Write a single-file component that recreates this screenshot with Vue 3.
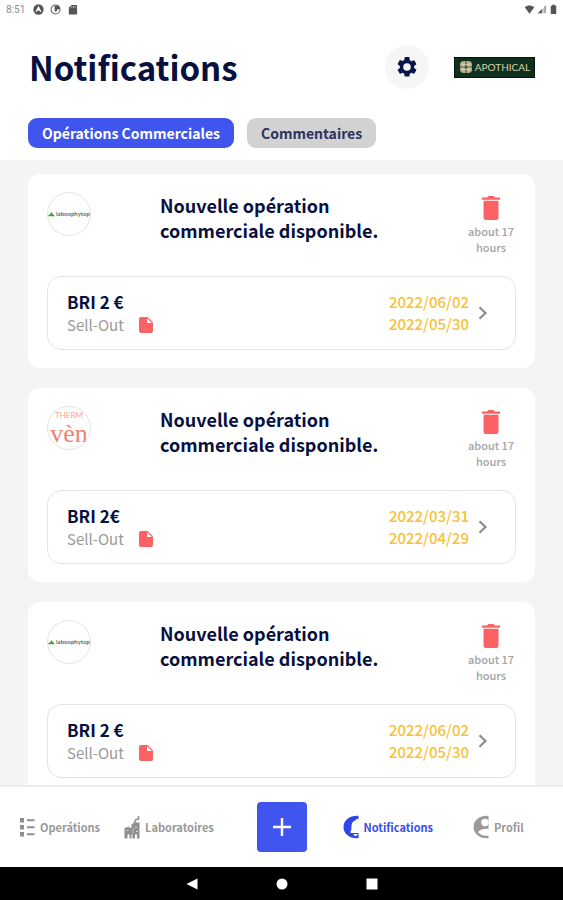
<template>
  <div class="app-screen">
    <div class="status-bar">
      <div class="status-group">
        <span class="status-time">8:51</span>
        <svg class="status-icon" viewBox="0 0 12 12">
          <circle cx="6" cy="6" r="5.6" fill="#555" />
          <path d="M3.4 8.4 6 3.4l2.6 5M4.6 7 6 6l1.4 1" fill="none" stroke="#fff" stroke-width="1.3" />
        </svg>
        <svg class="status-icon" viewBox="0 0 12 12">
          <circle cx="6" cy="6" r="4.9" fill="#fff" stroke="#666" stroke-width="1.2" />
          <path d="M5 2h5l1 3.500-3 .5-1.500 3L5 7z" fill="#555" />
        </svg>
        <svg class="status-icon" viewBox="0 0 12 12">
          <path d="M5 1h5a1 1 0 0 1 1 1v8.500a1 1 0 0 1-1 1H3a1 1 0 0 1-1-1V4z" fill="#555" />
          <path d="M5.200 2.400v1.800M7 2.400v1.800M8.800 2.400v1.800" stroke="#ddd" stroke-width=".8" />
        </svg>
      </div>
      <div class="status-group status-right">
        <svg class="status-icon" viewBox="0 0 12 12">
          <path d="M.8 3.600C4 1 8 1 11.200 3.600L6 10.500z" fill="#555" />
        </svg>
        <svg class="status-icon" viewBox="0 0 12 12">
          <path d="M10.500 1.500v8.500H2z" fill="#ccc" />
          <path d="M6.500 5.500V10H2z" fill="#555" />
          <path d="M10 2v8" stroke="#777" />
        </svg>
        <svg class="status-icon" viewBox="0 0 12 12">
          <path d="M4.500.8h3v1.200H9v9H3V2h1.500z" fill="#555" />
        </svg>
      </div>
    </div>

    <header class="page-header">
      <div class="title-row">
        <h1>Notifications</h1>
        <button class="settings-btn" type="button" aria-label="Paramètres">
          <svg viewBox="0 0 24 24">
            <path fill="#07154a" d="M19.140 12.940c.04-.3.060-.61.060-.94s-.02-.64-.07-.94l2.030-1.580a.49.49 0 0 0 .12-.61l-1.920-3.320a.49.49 0 0 0-.59-.22l-2.390.96a7 7 0 0 0-1.620-.94l-.36-2.540A.48.48 0 0 0 13.920 2h-3.840a.48.48 0 0 0-.47.410l-.36 2.540a7.300 7.300 0 0 0-1.620.94l-2.390-.96a.49.49 0 0 0-.59.220L2.740 8.870a.48.48 0 0 0 .12.610l2.030 1.580a6 6 0 0 0 0 1.880l-2.030 1.580a.49.49 0 0 0-.12.610l1.920 3.320c.12.220.37.290.59.220l2.390-.96c.5.380 1.030.7 1.620.94l.36 2.540c.05.240.24.410.48.410h3.840c.24 0 .44-.17.470-.41l.36-2.540a7.300 7.300 0 0 0 1.620-.94l2.390.96c.22.080.47 0 .59-.22l1.920-3.320a.48.48 0 0 0-.12-.61zM12 15.800a3.800 3.800 0 1 1 0-7.600 3.800 3.800 0 0 1 0 7.600" />
          </svg>
        </button>
        <div class="brand">
          <svg viewBox="0 0 14 14">
            <rect x="1" y="1" width="12" height="12" rx="4" fill="#b9b18d" />
            <path d="M7 0v14M0 7h14" stroke="#14301f" stroke-width=".8" />
            <path d="M4 3v8M10 3v8M3 4.500h8M3 9.500h8" stroke="#e4dcb8" stroke-width=".6" />
          </svg>
          <span>APOTHICAL</span>
        </div>
      </div>
      <div class="tabs">
        <button
          v-for="(tab, idx) in tabs"
          :key="tab"
          type="button"
          class="tab"
          :class="{ active: activeTab === idx }"
          @click="activeTab = idx"
        >{{ tab }}</button>
      </div>
    </header>

    <main class="list">
      <article v-for="item in notifications" :key="item.id" class="card">
        <div class="card-top">
          <div class="avatar">
            <div v-if="item.lab === 'thermale'" class="logo-ven">
              <span class="logo-ven-small">THERM</span>
              <span class="logo-ven-big">vèn</span>
            </div>
            <div v-else class="logo-naco">
              <svg viewBox="0 0 8 6">
                <path d="M0 5.500C1 3 2 3.500 2.500 4 3 1 4.500 0 5 2.500c.5 1 2 2 3 3z" fill="#36a12c" />
              </svg>
              <span>laboophytop</span>
            </div>
          </div>
          <h2>Nouvelle opération commerciale disponible.</h2>
          <div class="card-side">
            <button class="delete-btn" type="button" aria-label="Supprimer" @click="remove(item.id)">
              <svg viewBox="0 0 20 26">
                <path d="M1 2.500h5L7.500 1h5L14 2.500h5v2.300H1zM2.500 5.800h15v16.700a2.500 2.500 0 0 1-2.500 2.500H5a2.500 2.500 0 0 1-2.500-2.500z" fill="#fc6264" />
              </svg>
            </button>
            <span class="age">about 17 hours</span>
          </div>
        </div>
        <a class="operation" href="#">
          <div class="operation-info">
            <span class="operation-name">{{ item.name }}</span>
            <span class="operation-type">
              Sell-Out
              <svg viewBox="0 0 14 16">
                <path d="M2 0h6.500L14 5.500V14a2 2 0 0 1-2 2H2a2 2 0 0 1-2-2V2a2 2 0 0 1 2-2z" fill="#fc6264" />
                <path d="M8 1.200v4.800h4.800z" fill="#fff" />
              </svg>
            </span>
          </div>
          <div class="dates">
            <span>{{ item.dates[0] }}</span>
            <span>{{ item.dates[1] }}</span>
          </div>
          <svg class="chevron" viewBox="0 0 10 14">
            <path d="m1.500 1.200 6 5.800-6 5.800" fill="none" stroke="#8d8d8d" stroke-width="2.200" />
          </svg>
        </a>
      </article>
    </main>

    <nav class="bottom-nav">
      <div class="nav-side nav-left">
        <a class="nav-item" href="#">
          <svg class="nav-icon" viewBox="0 0 16 24">
            <path d="M1 3h4v4.500H1zM1 10h4v4.500H1zM1 17h4v4.500H1z" fill="#8f8f8f" />
            <path d="M8 5.200h7.500M8 12.200h7.500M8 19.200h7.500" stroke="#8f8f8f" stroke-width="2" />
          </svg>
          Operátions
        </a>
        <a class="nav-item" href="#">
          <svg class="nav-icon" viewBox="0 0 16 24">
            <path d="M.5 23.500V13l5-1.500V13l2-.5V9.500l3-2 5 0v16h-2.500v-4h-2v4H8.500v-4h-1v4H5.500v-4h-2v4z" fill="#8f8f8f" />
            <path d="M10 8.500 11.500 5l3-1V1" fill="none" stroke="#8f8f8f" stroke-width="1.600" />
            <path d="M2.500 15.500h2M8.500 14.500h1.500M12 11v2.500M8 17h2M12 16.500h2" stroke="#ddd" />
          </svg>
          Laboratoires
        </a>
      </div>
      <button class="add-btn" type="button" aria-label="Ajouter">
        <svg viewBox="0 0 20 20">
          <path d="M10 1v18M1 10h18" stroke="#fff" stroke-width="2.400" />
        </svg>
      </button>
      <div class="nav-side nav-right">
        <a class="nav-item active" href="#">
          <svg class="nav-icon" viewBox="0 0 16 24">
            <path d="M15.500.8C7 .2.500 5 .5 12S7 23.800 15.500 23.200V18H7.500v-1.500C8.800 15 8.300 13 8.500 10.500 8.700 7.500 10.500 5.500 13 5.200V4h2.500z" fill="#2f45e8" />
            <path d="M10.500 19h4a2 2 0 0 1-4 0" fill="#fff" />
          </svg>
          Notifications
        </a>
        <a class="nav-item" href="#">
          <svg class="nav-icon" viewBox="0 0 16 24">
            <path d="M15.500.8C7 .2.500 5 .5 12S7 23.800 15.500 23.200z" fill="#9a9a9a" />
            <circle cx="12" cy="7.500" r="3.700" fill="#fff" />
            <path d="M16 13.800c-5-.4-9 .8-11 3.200 2.500 3.200 6.500 4.400 11 3.600z" fill="#fff" />
          </svg>
          Profil
        </a>
      </div>
    </nav>

    <div class="system-bar">
      <svg viewBox="0 0 12 12"><path d="M11.500.5v11L.5 6z" fill="#fff" /></svg>
      <svg viewBox="0 0 12 12"><circle cx="6" cy="6" r="5.500" fill="#fff" /></svg>
      <svg viewBox="0 0 12 12"><path d="M.5.5h11v11H.5z" fill="#fff" /></svg>
    </div>
  </div>
</template>

<script setup>
import { ref } from 'vue'

const tabs = ['Opérations Commerciales', 'Commentaires']
const activeTab = ref(0)

const notifications = ref([
  { id: 1, lab: 'naco', name: 'BRI 2 €', dates: ['2022/06/02', '2022/05/30'] },
  { id: 2, lab: 'thermale', name: 'BRI 2€', dates: ['2022/03/31', '2022/04/29'] },
  { id: 3, lab: 'naco', name: 'BRI 2 €', dates: ['2022/06/02', '2022/05/30'] }
])

const remove = (id) => {
  notifications.value = notifications.value.filter((n) => n.id !== id)
}
</script>

<style>
body {
  margin: 0;
  background: #f4f4f4;
}
</style>

<style scoped>
.app-screen {
  display: flex;
  flex-direction: column;
  height: 100vh;
  font-family: "Noto Sans CJK SC", "Noto Sans", sans-serif;
  color: #07103f;
  background: #f4f4f4;
}
button {
  font-family: inherit;
  border: none;
  padding: 0;
  cursor: pointer;
}
a {
  color: inherit;
  text-decoration: none;
}
svg {
  display: block;
  flex-shrink: 0;
}
.status-bar {
  display: flex;
  justify-content: space-between;
  height: 18px;
  padding: 0 4px 0 6px;
  background: #fff;
}
.status-group {
  display: flex;
  align-items: center;
  gap: 6px;
}
.status-right {
  gap: 1px;
}
.status-time {
  margin-right: 2px;
  font: 10px Roboto, sans-serif;
  color: #8c8c8c;
}
.status-icon {
  width: 11px;
  height: 11px;
}
.page-header {
  padding: 24px 28px 12px;
  background: #fff;
}
.title-row {
  display: flex;
  align-items: center;
  height: 50px;
}
h1 {
  flex: 1;
  margin: 0;
  padding-left: 1px;
  font-size: 33px;
  line-height: 50px;
  font-weight: 700;
}
.settings-btn {
  display: flex;
  align-items: center;
  justify-content: center;
  width: 44px;
  height: 44px;
  margin-right: 25px;
  border-radius: 50%;
  background: #f6f6f6;
}
.settings-btn svg {
  width: 24px;
  height: 24px;
}
.brand {
  display: flex;
  align-items: center;
  justify-content: center;
  gap: 2px;
  box-sizing: border-box;
  width: 81px;
  height: 21px;
  border: 1px solid #08120c;
  background: #10301f;
  color: #d8d2ac;
  font: 10px/20px Lato, sans-serif;
}
.brand svg {
  width: 14px;
  height: 14px;
}
.tabs {
  display: flex;
  gap: 13px;
  margin-top: 26px;
}
.tab {
  height: 30px;
  padding: 0 14px;
  border-radius: 9px;
  background: #d2d2d2;
  color: #2c3260;
  font-size: 14px;
  line-height: 30px;
  font-weight: 700;
}
.tab.active {
  background: #4054ee;
  color: #fff;
}
.list {
  display: flex;
  flex: 1;
  flex-direction: column;
  gap: 20px;
  min-height: 0;
  padding: 14px 28px 0;
  overflow: hidden;
}
.card {
  flex-shrink: 0;
  padding: 18px 19px;
  border-radius: 12px;
  background: #fff;
}
.card-top {
  display: flex;
  align-items: flex-start;
  height: 84px;
}
.avatar {
  display: flex;
  align-items: center;
  justify-content: center;
  box-sizing: border-box;
  width: 44px;
  height: 44px;
  border: 1px solid #e4e4e4;
  border-radius: 50%;
  overflow: hidden;
}
.logo-naco {
  display: flex;
  align-items: center;
  gap: 1px;
  font: 700 6px/8px Lato, sans-serif;
  color: #666;
}
.logo-naco svg {
  width: 7px;
  height: 6px;
}
.logo-ven {
  display: flex;
  flex-direction: column;
  align-items: center;
  color: #f0826f;
}
.logo-ven-small {
  font: 8px/12px Lato, sans-serif;
  color: #f3a99c;
}
.logo-ven-big {
  font: 26px/26px "Liberation Serif", serif;
}
h2 {
  flex: 1;
  margin: 1px 0 0 69px;
  max-width: 230px;
  font-size: 18px;
  line-height: 25px;
  font-weight: 700;
}
.card-side {
  display: flex;
  flex-direction: column;
  align-items: center;
  width: 50px;
  margin-left: auto;
  padding-top: 3px;
}
.delete-btn {
  background: none;
}
.delete-btn svg {
  width: 20px;
  height: 26px;
}
.age {
  margin-top: 2px;
  text-align: center;
  font-size: 11px;
  line-height: 16px;
  font-weight: 500;
  color: #a3a3a3;
}
.operation {
  display: flex;
  align-items: center;
  box-sizing: border-box;
  height: 74px;
  padding: 0 27px 0 19px;
  border: 1px solid #e4e4e4;
  border-radius: 14px;
}
.operation-info {
  display: flex;
  flex: 1;
  flex-direction: column;
}
.operation-name {
  font-size: 17px;
  line-height: 24px;
  font-weight: 700;
}
.operation-type {
  display: flex;
  align-items: center;
  gap: 15px;
  font-size: 15px;
  line-height: 22px;
  color: #9a9a9a;
}
.operation-type svg {
  width: 14px;
  height: 16px;
}
.dates {
  display: flex;
  flex-direction: column;
  font-size: 15px;
  line-height: 22px;
  font-weight: 500;
  color: #f8c137;
}
.chevron {
  width: 10px;
  height: 14px;
  margin-left: 9px;
}
.bottom-nav {
  display: grid;
  grid-template-columns: 1fr auto 1fr;
  align-items: center;
  height: 80px;
  border-top: 2px solid #ececec;
  background: #fff;
}
.nav-side {
  display: flex;
  align-items: center;
}
.nav-left {
  gap: 24px;
  padding-left: 19px;
}
.nav-right {
  gap: 40px;
  padding-left: 36px;
}
.nav-item {
  display: flex;
  align-items: center;
  gap: 5px;
  font-size: 11px;
  line-height: 18px;
  font-weight: 700;
  color: #989898;
}
.nav-item.active {
  color: #3a4cea;
}
.nav-icon {
  width: 16px;
  height: 24px;
}
.add-btn {
  display: flex;
  align-items: center;
  justify-content: center;
  width: 50px;
  height: 50px;
  border-radius: 4px;
  background: #4054ee;
}
.add-btn svg {
  width: 20px;
  height: 20px;
}
.system-bar {
  display: flex;
  align-items: center;
  justify-content: center;
  gap: 78px;
  height: 33px;
  background: #000;
}
.system-bar svg {
  width: 12px;
  height: 12px;
}
</style>
